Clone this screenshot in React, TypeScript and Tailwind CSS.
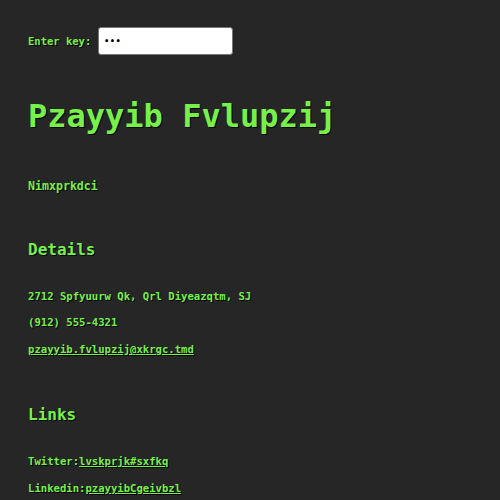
import React from 'react';

const green = 'text-[#78f04a]';
const shadow = '[text-shadow:1px_1px_0_#000]';

export default function App() {
  return (
    <div
      className={`min-h-[500px] w-full bg-[#262626] pl-[28px] pt-[27px] font-bold ${green} ${shadow}`}
      style={{ fontFamily: '"DejaVu Sans Mono", "Liberation Mono", monospace' }}
    >
      {/* Key entry */}
      <div className="flex h-[28px] items-center">
        <label className="mr-[7px] text-[10.5px] leading-[16px]">Enter key:</label>
        <input
          type="password"
          defaultValue="abc"
          readOnly
          className="h-[28px] w-[135px] rounded-[3px] border border-[#777] bg-white px-[5px] text-[8px] tracking-[1px] text-black [text-shadow:none] outline-none"
        />
      </div>

      <h1 className="mt-[41px] text-[32px] leading-[40px]">Pzayyib Fvlupzij</h1>
      <p className="mt-[42px] text-[11.6px] leading-[16px]">Nimxprkdci</p>

      <h2 className="mt-[44px] text-[16px] leading-[24px]">Details</h2>
      <p className="mt-[26px] text-[10.6px] leading-[16px]">2712 Spfyuurw Qk, Qrl Diyeazqtm, SJ</p>
      <p className="mt-[10px] text-[10.6px] leading-[16px]">(912) 555-4321</p>
      <p className="mt-[11px] text-[10.6px] leading-[16px]">
        <a href="#" className="underline">pzayyib.fvlupzij@xkrgc.tmd</a>
      </p>

      <h2 className="mt-[46px] text-[16px] leading-[24px]">Links</h2>
      <p className="mt-[26px] text-[10.6px] leading-[16px]">
        Twitter:<a href="#" className="underline">lvskprjk#sxfkq</a>
      </p>
      <p className="mt-[11px] text-[10.6px] leading-[16px]">
        Linkedin:<a href="#" className="underline">pzayyibCgeivbzl</a>
      </p>
    </div>
  );
}
